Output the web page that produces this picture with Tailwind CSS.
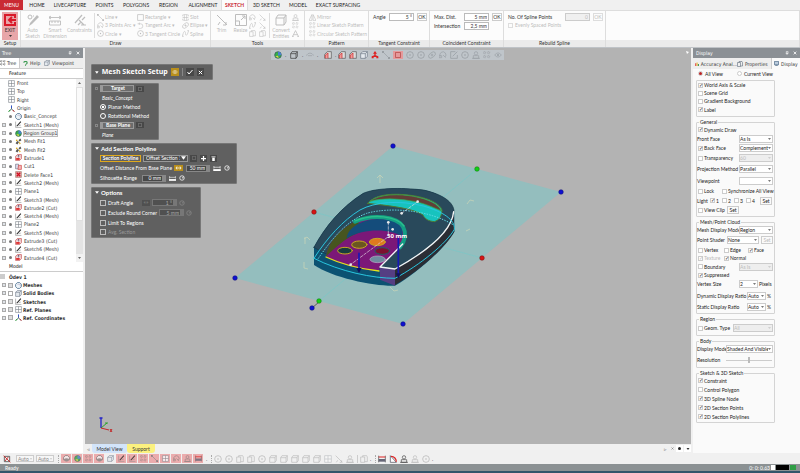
<!DOCTYPE html>
<html lang="en">

<head>
    <meta charset="UTF-8">
    <meta name="viewport" content="width=device-width, initial-scale=1.0">
    <title>Mesh Sketch Setup</title>
    <script src="https://cdn.jsdelivr.net/npm/@tailwindcss/browser@4"></script>
</head>

<body class="h-screen flex flex-col overflow-hidden bg-[#f0f0f0] font-['Lato','Open_Sans',sans-serif] text-[5px] leading-[6px] text-[#333] whitespace-nowrap">

    <!-- icons -->
    <svg class="hidden">
        <symbol id="i-plane" viewBox="0 0 12 12"><path d="M1 1h10v10H1zM6 1v10M1 6h10" fill="#fff" stroke="#777d85" /></symbol>
        <symbol id="i-origin" viewBox="0 0 12 12"><path d="M6 7V1M6 7l5 4M6 7l-5 4" fill="none" stroke="#356" stroke-width="1.3" /><path d="M6 1v4" stroke="#2a4bd0" stroke-width="1.6" /><path d="M8 9l3 2" stroke="#c22" stroke-width="1.6" /><path d="M4 9l-3 2" stroke="#2a2" stroke-width="1.6" /></symbol>
        <symbol id="i-mesh" viewBox="0 0 12 12"><path d="M4 1h4l3 3v4l-3 3H4L1 8V4z" fill="#eef4f8" stroke="#4b7090" stroke-width="1.4" /><path d="M4 4h5v4" fill="none" stroke="#aac" /></symbol>
        <symbol id="i-tbmesh" viewBox="0 0 12 12"><path d="M4 1h4l3 3v4H1V4z" fill="#f4f4f4" stroke="#666" stroke-width="1.3" /><path d="M1 8c3-3 7-3 10 0-3 4-7 4-10 0z" fill="#888" /></symbol>
        <symbol id="i-sketch" viewBox="0 0 12 12"><path d="M1 1v10h10" fill="none" stroke="#888" /><path d="M3 9l7-8" stroke="#222" stroke-width="1.8" /><path d="M6 8l4-1" stroke="#888" /></symbol>
        <symbol id="i-region" viewBox="0 0 12 12"><circle cx="6" cy="6" r="5" fill="#35b04a" stroke="#355" /><path d="M6 1a5 5 0 0 1 5 5l-5 1z" fill="#4a7fd0" /><path d="M2 8l4-1 1 4z" fill="#e3d24a" /></symbol>
        <symbol id="i-fit" viewBox="0 0 12 12"><path d="M1 9l3-4 3 2-3 4zM6 4l3-3 2 3-3 2z" fill="#555" /><path d="M6 6l4 3-2 2z" fill="#e0b020" /><circle cx="3" cy="4" r="1.5" fill="#e0b020" /></symbol>
        <symbol id="i-extrude" viewBox="0 0 12 12"><path d="M1 4l3-3h7v7l-3 3H1z" fill="#f6d9da" stroke="#b33" /><path d="M2 10V7h6v3z" fill="#d22" /><path d="M6 6V2M4 4l2-2 2 2" stroke="#446" fill="none" /></symbol>
        <symbol id="i-cut" viewBox="0 0 12 12"><path d="M1 2h5v8H1z" fill="#dde" stroke="#667" /><path d="M6 4h5v7H5z" fill="#f3b5b5" stroke="#c33" /></symbol>
        <symbol id="i-delete" viewBox="0 0 12 12"><path d="M1 1h10v10H1z" fill="#e5a3a6" stroke="#976" /><path d="M3 3l6 6M9 3l-6 6" stroke="#d00f20" stroke-width="2.2" /></symbol>
        <symbol id="i-solid" viewBox="0 0 12 12"><path d="M1 4l3-3h7v7l-3 3H1zM1 4h7v7M8 4l3-3" fill="#e4e9ee" stroke="#6a7684" /></symbol>
        <symbol id="i-line" viewBox="0 0 12 12"><path d="M2 2l8 8" stroke="currentColor" fill="none" /><path d="M0 0h3v3H0zM9 9h3v3H9z" fill="currentColor" /></symbol>
        <symbol id="i-rect" viewBox="0 0 12 12"><path d="M1 1h10v10H1z" stroke="currentColor" fill="none" stroke-width="1.2" /></symbol>
        <symbol id="i-circle" viewBox="0 0 12 12"><circle cx="6" cy="6" r="5" stroke="currentColor" fill="none" stroke-width="1.2" /><circle cx="6" cy="6" r="1.2" fill="currentColor" /></symbol>
        <symbol id="i-arc" viewBox="0 0 12 12"><path d="M2 8a4.500 4.500 0 1 1 7 1M6 6l4 4M0 7h4v3H0z" stroke="currentColor" fill="none" /></symbol>
        <symbol id="i-tarc" viewBox="0 0 12 12"><path d="M1 3h5a4 4 0 0 1 0 8M4 1v4M3 11h3" stroke="currentColor" fill="none" /></symbol>
        <symbol id="i-slot" viewBox="0 0 12 12"><path d="M4 1h4a4 4 0 0 1 0 10H4A4 4 0 0 1 4 1zM1 6h10M4 1v10M8 1v10" stroke="currentColor" fill="none" /></symbol>
        <symbol id="i-ellipse" viewBox="0 0 12 12"><ellipse cx="6" cy="6" rx="6" ry="3.500" transform="rotate(-40 6 6)" stroke="currentColor" fill="none" /><path d="M4 6h4M6 4v4" stroke="currentColor" /></symbol>
        <symbol id="i-spline" viewBox="0 0 12 12"><path d="M1 10C3 0 6 1 6 6s3 4 5-4M0 8v3h3M9 1h3v2" stroke="currentColor" fill="none" /></symbol>
        <symbol id="i-pencil" viewBox="0 0 12 12"><circle cx="3" cy="3" r="2" stroke="currentColor" fill="none" /><path d="M2 12l1-3 7-8 2 2-7 7z" fill="currentColor" /><path d="M6 2l1 0" stroke="currentColor" /></symbol>
        <symbol id="i-dim" viewBox="0 0 12 12"><path d="M0 2v3M12 2v3M0 3.500h12M2 2L0 3.500 2 5M10 2l2 1.500L10 5M.5 7h11v4H.5zM3 7v2M6 7v2M9 7v2" stroke="currentColor" fill="none" stroke-width=".9" /></symbol>
        <symbol id="i-constraint" viewBox="0 0 12 12"><path d="M1 9L8 1M4 11l3-3M5 6l5 5M8 6l3-3M7 11h5" stroke="currentColor" fill="none" stroke-width="1.200" /></symbol>
        <symbol id="i-trim" viewBox="0 0 12 12"><path d="M1 1l10 10M10 8v3H7M4 8l-2 3" stroke="currentColor" fill="none" /></symbol>
        <symbol id="i-resize" viewBox="0 0 12 12"><path d="M.5 .5h11v11H.5zM.5 7h4v4.500M6 6l4-4M7 2h3v3" stroke="currentColor" fill="none" /></symbol>
        <symbol id="i-cube" viewBox="0 0 12 12"><path d="M1 4l2-3h8v7l-2 3H1zM1 4h8v7M9 4l2-3" stroke="currentColor" fill="none" /></symbol>
        <symbol id="i-mirror" viewBox="0 0 12 12"><path d="M5 1v10H0zM7 1v10h5z" stroke="currentColor" fill="none" /></symbol>
        <symbol id="i-pattern" viewBox="0 0 12 12"><path d="M1 1h3v3H1zM7 1h3v3H7zM1 7h3v3H1zM7 7h3v3H7z" stroke="currentColor" fill="none" stroke-dasharray="2 1" /></symbol>
        <symbol id="i-text" viewBox="0 0 12 12"><path d="M1 11L6 1l5 10M3 8h6M0 11h3M9 11h3" stroke="currentColor" fill="none" stroke-width="1.300" /></symbol>
        <symbol id="i-person" viewBox="0 0 12 12"><circle cx="6" cy="3.500" r="2.500" stroke="currentColor" fill="none" /><path d="M2 7h8v4H2zM0 11h12" stroke="currentColor" fill="none" /></symbol>
        <symbol id="i-edit" viewBox="0 0 12 12"><path d="M8 1H1v10h10V6M4 8l7-7" stroke="currentColor" fill="none" stroke-width="1.200" /></symbol>
        <symbol id="i-page" viewBox="0 0 12 12"><path d="M1 3h6v8H1zM4 3V1h6l1 2v7H7" stroke="currentColor" fill="none" /></symbol>
        <symbol id="i-caliper" viewBox="0 0 12 12"><path d="M1 1v10M11 1v10" stroke="#444" /><path d="M1 3h10" stroke="#d22" stroke-width="1.500" /><path d="M1 6h10v4H1z" fill="#667" /></symbol>
        <symbol id="i-angle" viewBox="0 0 12 12"><path d="M2 1v10h9z" fill="#fff" stroke="#445" /><path d="M3 2c5 0 8 4 8 8" fill="none" stroke="#d22" stroke-width="1.800" /></symbol>
        <symbol id="i-section" viewBox="0 0 12 12"><path d="M1 11V5l4-4h6v10z" fill="#ddd" stroke="#555" /><path d="M2 11V6l4-3v8" fill="#e99" stroke="#c22" /></symbol>
        <symbol id="i-peak" viewBox="0 0 12 12"><path d="M6 0l3 4H7v3H5V4H3z" fill="#d22" /><path d="M1 11V8l5-2 5 2v3H8V9H4v2z" fill="#d22" /></symbol>
        <symbol id="i-cap" viewBox="0 0 12 12"><path d="M1 7c1-5 9-5 10 0M3 7h6" stroke="currentColor" fill="none" /></symbol>
        <symbol id="i-eye" viewBox="0 0 12 12"><path d="M1 6c3-4 7-4 10 0-3 4-7 4-10 0z" stroke="currentColor" fill="none" /><circle cx="6" cy="6" r="1.500" fill="currentColor" /></symbol>
        <symbol id="i-ruler" viewBox="0 0 12 8"><path d="M1 0v4M11 0v4M1 2h10" stroke="currentColor" /><path d="M0 5h12v3H0z" fill="currentColor" /></symbol>
        <symbol id="i-clock" viewBox="0 0 12 12"><circle cx="6" cy="6" r="4.500" stroke="currentColor" fill="none" stroke-width="1.500" /><path d="M6 6l4-3M6 6h3" stroke="currentColor" /></symbol>
        <symbol id="i-pin" viewBox="0 0 12 12"><path d="M4 1h5v6H4zM2 7h8M6 7v5" stroke="currentColor" fill="none" stroke-width="1.600" /></symbol>
        <symbol id="i-x" viewBox="0 0 12 12"><path d="M2 2l8 8M10 2l-8 8" stroke="currentColor" stroke-width="2.400" /></symbol>
        <symbol id="i-nosnap" viewBox="0 0 12 12"><path d="M2 2h8v8H2z" stroke="#555" fill="none" stroke-width="1.300" /><path d="M1 1l10 10M8 3L3 9" stroke="#c22" stroke-width="1.300" /></symbol>
        <symbol id="i-down" viewBox="0 0 6 4"><path d="M0 0h6L3 4z" fill="currentColor" /></symbol>
    </svg>

    <nav class="h-[10px] shrink-0 flex items-stretch text-[#222]">
        <button class="w-[23px] bg-[#c92a33] text-white">MENU</button>
        <a href="#" class="w-[28px] grid place-items-center">HOME</a>
        <a href="#" class="w-[38px] grid place-items-center">LIVECAPTURE</a>
        <a href="#" class="w-[31px] grid place-items-center">POINTS</a>
        <a href="#" class="w-[32px] grid place-items-center">POLYGONS</a>
        <a href="#" class="w-[33px] grid place-items-center">REGION</a>
        <a href="#" class="w-[36px] grid place-items-center">ALIGNMENT</a>
        <a href="#" class="w-[27px] grid place-items-center bg-[#fcfcfc] border-x border-[#ddd] text-[#c92a33] font-bold">SKETCH</a>
        <a href="#" class="w-[37px] grid place-items-center">3D SKETCH</a>
        <a href="#" class="w-[26px] grid place-items-center">MODEL</a>
        <a href="#" class="w-[54px] grid place-items-center">EXACT SURFACING</a>
    </nav>

    <header id="ribbon" class="h-[38px] shrink-0 flex bg-[#fcfcfc] border-y border-[#ddd] border-b-[#bfc3c7] text-[#bdbdbd]
        [&>section]:flex [&>section]:flex-col [&>section]:border-r [&>section]:border-[#ddd] [&>section>div]:h-[29px] [&>section>div]:shrink-0
        [&_h2]:flex-1 [&_h2]:bg-[#ebebeb] [&_h2]:text-[#333] [&_h2]:text-center [&_h2]:leading-[7px]">
        <section class="w-[21px]">
            <div class="px-[2px] pt-px">
                <button class="w-full h-full bg-[#e8a6a9] text-[#333] flex flex-col items-center">
                    <svg class="w-3 h-3 mt-[2px]" viewBox="0 0 12 12"><path d="M11 4V1H1v10h10V8M5 6h7M8 3L5 6l3 3" fill="none" stroke="#d91a2a" stroke-width="2" /></svg>
                    <span class="mt-px">EXIT</span>
                    <svg class="w-[3px] h-[2px] mt-[2px]"><use href="#i-down" /></svg>
                </button>
            </div>
            <h2>Setup</h2>
        </section>
        <section class="w-[190px]">
            <div class="flex">
                <button class="w-[23px] pt-[3px] flex flex-col items-center" disabled><svg class="w-3 h-3 mb-px"><use href="#i-pencil" /></svg>Auto<br>Sketch</button>
                <button class="w-[22px] pt-[3px] flex flex-col items-center" disabled><svg class="w-3 h-3 mb-px"><use href="#i-dim" /></svg>Smart<br>Dimension</button>
                <button class="w-[27px] pt-[3px] flex flex-col items-center" disabled><svg class="w-3 h-3 mb-px"><use href="#i-constraint" /></svg>Constraints</button>
                <div data-tools="line:Line ▾,arc:3 Points Arc ▾,circle:Circle ▾" class="w-[43px] ml-px my-[2px] border-l border-[#ddd] pl-[2px] flex flex-col"></div>
                <div data-tools="rect:Rectangle ▾,tarc:Tangent Arc ▾,circle:3 Tangent Circle" class="w-[45px] my-[2px] flex flex-col"></div>
                <div data-tools="slot:Slot,ellipse:Ellipse ▾,spline:Spline" class="w-[28px] my-[2px] flex flex-col"></div>
            </div>
            <h2>Draw</h2>
        </section>
        <section class="w-[94px]">
            <div class="flex">
                <button class="w-[21px] pt-[3px] flex flex-col items-center" disabled><svg class="w-3 h-3 mb-px"><use href="#i-trim" /></svg>Trim</button>
                <button class="w-[17px] pt-[3px] flex flex-col items-center" disabled><svg class="w-3 h-3 mb-px"><use href="#i-resize" /></svg>Resize</button>
                <div data-tools="arc:,spline:,page:" class="w-[10px] my-[2px] flex flex-col"></div>
                <div data-tools="trim:,trim:,page:" class="w-[11px] my-[2px] border-r border-[#ddd] flex flex-col"></div>
                <button class="w-[22px] pt-[3px] flex flex-col items-center" disabled><svg class="w-3 h-3 mb-px"><use href="#i-cube" /></svg>Convert<br>Entities</button>
                <div data-tools="person:,pattern:,text:" class="my-[2px] flex flex-col"></div>
            </div>
            <h2>Tools</h2>
        </section>
        <section class="w-[64px]">
            <div class="flex">
                <div data-tools="mirror:Mirror,pattern:Linear Sketch Pattern,pattern:Circular Sketch Pattern" class="ml-1 my-[2px] flex flex-col"></div>
            </div>
            <h2>Pattern</h2>
        </section>
        <section class="w-[61px]">
            <div class="flex items-start gap-[3px] pt-[2px] pl-1 text-[#333]">
                <label for="angle" class="w-[13px] leading-[8px]">Angle</label>
                <input id="angle" value="5 °" class="w-[25px] h-2 border border-[#bbb] bg-white text-right pr-px">
                <button class="w-[10px] h-2 border border-[#ccc] bg-white leading-[6px]">OK</button>
            </div>
            <h2>Tangent Constraint</h2>
        </section>
        <section class="w-[74px]">
            <div class="grid grid-cols-[27px_25px_10px] gap-x-[3px] gap-y-px content-start pt-[2px] pl-1 text-[#333]">
                <label for="maxd" class="leading-[8px]">Max. Dist.</label>
                <input id="maxd" value="5 mm" class="h-2 min-w-0 border border-[#bbb] bg-white text-right pr-px">
                <button class="h-2 border border-[#ccc] bg-white leading-[6px]">OK</button>
                <label for="inter" class="leading-[8px]">Intersection</label>
                <input id="inter" value="2,5 mm" class="h-2 min-w-0 border border-[#bbb] bg-white text-right pr-px">
            </div>
            <h2>Coincident Constraint</h2>
        </section>
        <section class="w-[102px]">
            <div class="pt-[2px] pl-1">
                <div class="flex gap-[3px]">
                    <label for="pts" class="w-[54px] leading-[8px] text-[#333]">No. Of Spline Points</label>
                    <input id="pts" value="0" disabled class="w-[25px] h-2 border border-[#ccc] bg-[#f0f0f0] text-right pr-px">
                    <button disabled class="w-[10px] h-2 border border-[#ddd] leading-[6px]">OK</button>
                </div>
                <label class="flex items-center gap-[2px] h-[8px]"><input type="checkbox" disabled class="appearance-none size-[5px] border border-[#ddd]">Evenly Spaced Points</label>
            </div>
            <h2>Rebuild Spline</h2>
        </section>
        <section class="flex-1"><div></div><h2></h2></section>
    </header>

    <main class="flex-1 min-h-0 flex">

        <aside class="w-[83px] shrink-0 flex flex-col bg-white font-['DejaVu_Sans_Condensed','DejaVu_Sans',sans-serif]">
            <div class="h-[10px] bg-[#8b9095] text-white flex items-center px-[2px] gap-[4px]">
                <span class="flex-1">Tree</span>
                <svg class="size-[4px]"><use href="#i-pin" /></svg><svg class="size-[4px] mr-px"><use href="#i-x" /></svg>
            </div>
            <div class="h-[11px] bg-[#eee] border-b border-[#ccc] flex items-stretch">
                <button class="w-[20px] bg-white border-r border-[#ccc] flex items-center gap-px"><svg class="size-[6px]"><use href="#i-pattern" /></svg>Tree</button>
                <button class="w-[22px] flex items-center gap-[2px] pl-[3px]"><svg class="size-[5px]" viewBox="0 0 12 12"><path d="M2 4c0-4 8-4 8 0S6 7 6 9M6 10v2" fill="none" stroke="#3a9a50" stroke-width="2.500" /></svg>Help</button>
                <button class="flex items-center gap-[2px] pl-[2px]"><svg class="size-[6px]"><use href="#i-solid" /></svg>Viewpoint</button>
            </div>
            <h3 class="h-[10px] border-b border-[#ccc] pl-[9px] leading-[9px] text-black">Feature</h3>
            <div class="h-[183px] flex">
                <ul id="features" class="flex-1 min-w-0 flex flex-col"></ul>
                <div class="w-[7px] bg-[#e4e4e4] flex flex-col items-center text-[#666]">
                    <span class="w-full h-[8px] bg-[#f2f2f2] grid place-items-center"><svg class="w-[3px] h-[2px] rotate-180"><use href="#i-down" /></svg></span>
                    <span class="w-full h-[134px] bg-[#fafafa] border border-[#e0e0e0]"></span>
                    <span class="w-full h-[8px] mt-auto bg-[#f2f2f2] grid place-items-center"><svg class="w-[3px] h-[2px]"><use href="#i-down" /></svg></span>
                </div>
            </div>
            <h3 class="h-[10px] border-b border-[#ccc] pl-[9px] leading-[8px] text-black">Model</h3>
            <div class="h-[9px] flex items-center gap-[4px] font-bold"><span class="size-[5px] bg-[#ccc]"></span>Ödev 1</div>
            <ul id="model" class="h-[41px] flex flex-col font-bold"></ul>
        </aside>

        <div class="flex-1 min-w-0 mx-[2px] flex flex-col">
            <section class="relative flex-1 min-h-0 bg-[#b3b3b3] overflow-hidden">
                <svg class="absolute inset-0 w-full h-full" viewBox="85 48 606 396">
                    <path d="M393 146L561 192 403 324 235 278z" fill="#94bebe" />
                    <g fill="none" stroke="#62d0d2" stroke-width=".5" opacity=".7"><path d="M314 212L482 258M477 169L319 301" /></g>
                    <g fill="none" stroke="#c5d3b8" stroke-width=".8"><path d="M380 183v-8M377 178l3-3 3 3M467 204l3-4 4 1M305 237v7M304 239l3-2 3 3M304 262v6l4 1M390 287l4 4 4-1M466 231l4-2" /></g>
                    <g transform="translate(300 170) scale(.3333)" fill="none" stroke-linecap="round" stroke-linejoin="round">
                        <path d="M42 232C75 170 125 110 190 70C225 54 300 52 370 60C430 73 462 98 463 135L463 185C435 235 350 310 285 347C230 350 100 325 42 285z" fill="#0c5272" />
                        <path d="M42 232C75 170 125 110 190 70C225 54 300 52 370 60C430 73 462 98 462 125C450 190 370 245 285 297C200 300 100 268 42 232z" fill="#29495b" stroke="#183646" stroke-width="2" />
                        <path d="M461 125C455 190 370 250 285 297V345C350 308 435 235 463 185z" fill="#2b2d34" />
                        <path d="M285 297L240 291v38l45 18z" fill="#553e83" />
                        <path d="M203 100C225 72 280 68 340 77C390 85 420 102 426 120C425 140 418 150 403 155C385 153 376 148 368 134C330 112 255 106 203 100z" fill="#17c3be" stroke="#4f7a32" stroke-width="3" />
                        <path d="M210 94C240 70 300 72 340 79C385 87 418 104 423 122C390 108 370 98 330 92C290 86 250 83 210 94z" fill="#623d38" stroke="#3ca644" stroke-width="2" />
                        <path d="M78 260C85 215 120 175 175 150C220 130 285 138 308 168C325 190 320 215 305 230L240 291L237 303C180 300 120 282 78 260z" fill="#7b1878" />
                        <path d="M78 260C85 215 120 175 175 150L180 187C150 198 120 218 78 260z" fill="#47551f" />
                        <path d="M140 205C145 160 215 138 270 150C300 160 315 175 305 200C280 180 200 170 140 205z" fill="#144c7b" />
                        <path d="M165 155C220 130 290 140 309 170C320 190 317 210 300 232" stroke="#149f84" stroke-width="12" />
                        <path d="M165 153C220 130 290 138 312 168" stroke="#2bbf8c" stroke-width="4" />
                        <g stroke="#c7a923" stroke-width="3"><ellipse cx="135" cy="242" rx="22" ry="10" fill="#173d3d" /><ellipse cx="178" cy="224" rx="23" ry="11" fill="#6b5620" /><ellipse cx="232" cy="216" rx="24" ry="11" fill="#e07a1e" /></g>
                        <ellipse cx="247" cy="243" rx="22" ry="10" fill="#7d1030" stroke="#206060" stroke-width="3" />
                        <ellipse cx="233" cy="268" rx="23" ry="10" fill="#6f8ca0" stroke="#bba7c4" stroke-width="2" />
                        <path d="M78 261C125 283 180 297 237 303" stroke="#dfe51d" stroke-width="4" />
                        <path d="M461 125C455 190 370 250 285 297L240 291L308 222" stroke="#f2f5f6" stroke-width="4" />
                        <path d="M42 265C120 305 220 325 285 325C360 285 440 220 463 178C466 150 430 125 370 108C300 90 225 95 180 120C130 150 80 205 42 265" stroke="#29c6df" stroke-width="3" />
                        <path d="M55 265C100 200 145 150 200 130C270 110 390 120 460 165" stroke="#65dbe8" stroke-width="3" stroke-dasharray="2 6" />
                        <path d="M150 285L265 200M305 130L353 95M265 157v38" stroke="#e2d9e2" stroke-width="2" stroke-dasharray="8 5" />
                        <g fill="#e8eaea"><circle cx="305" cy="130" r="4" /><circle cx="353" cy="95" r="4" /><circle cx="265" cy="157" r="4" /><circle cx="278" cy="178" r="4" /><circle cx="152" cy="284" r="4" /></g>
                        <path d="M177 250v45M295 205v105" stroke="#1717b5" stroke-width="5" />
                        <path d="M169 294l8 15 8-15zM287 310l8 15 8-15z" fill="#101060" />
                    </g>
                    <text x="387" y="238" fill="#fff" font-size="6" font-weight="700" font-family="Open Sans">50 mm</text>
                    <path d="M312 308l7-6" stroke="#222" stroke-width=".6" />
                    <g fill="#1010d0" stroke="#0b0b70" stroke-width=".5"><circle cx="393" cy="146" r="2.300" /><circle cx="561" cy="192" r="2.300" /><circle cx="403" cy="324" r="2.300" /><circle cx="235" cy="278" r="2.300" /><circle cx="312" cy="308" r="2.300" /></g>
                    <g fill="#14d014" stroke="#0b700b" stroke-width=".5"><circle cx="477" cy="169" r="2.300" /><circle cx="319" cy="301" r="2.300" /></g>
                    <g fill="#d81414" stroke="#700b0b" stroke-width=".5"><circle cx="314" cy="212" r="2.300" /><circle cx="482" cy="258" r="2.300" /></g>
                    <g fill="none" stroke-width=".9"><path d="M101 428v-10M99.500 418h3" stroke="#2222c8" stroke-width="1.300" /><path d="M101 428l6-5M105 423h3" stroke="#21a321" /><path d="M101 428l8 2M110 429l2 3M112 429l-2 3" stroke="#c41a1a" /></g>
                    <path d="M686 51l3 1-2 2z" fill="#fff" />
                </svg>

                <div id="viewbar" class="absolute left-[186px] top-[2px] h-[10px] bg-[#bfc5ca] flex items-center text-[#999fa4]"></div>

                <form class="absolute left-[6px] top-[16px] flex flex-col items-start gap-[3px] text-white
                    [&>section]:bg-[#606060] [&>section]:rounded-[1px] [&>section]:border [&>section]:border-[#777]">
                    <section class="w-[122px] h-[16px] flex items-center gap-[3px] px-[3px]">
                        <svg class="w-[4px] h-[3px]"><use href="#i-down" /></svg>
                        <h1 class="flex-1 font-['Open_Sans',sans-serif] text-[7px] font-bold">Mesh Sketch Setup</h1>
                        <button type="button" aria-label="Preview" class="w-[9px] h-[8px] bg-[#b98f1c] grid place-items-center"><svg class="size-[6px]"><use href="#i-eye" /></svg></button>
                        <span class="w-px h-[8px] bg-[#888]"></span>
                        <button type="button" aria-label="OK" class="size-[8px] bg-[#484848] grid place-items-center"><svg class="size-[6px]" viewBox="0 0 12 12"><path d="M1 6l3 4 7-8" fill="none" stroke="#fff" stroke-width="2" /></svg></button>
                        <button type="button" aria-label="Cancel" class="size-[8px] bg-[#484848] grid place-items-center mr-[5px]"><svg class="size-[5px]"><use href="#i-x" /></svg></button>
                    </section>

                    <section class="w-[68px] h-[57px] px-[3px] flex flex-col justify-around">
                        <div class="flex items-center gap-[2px]"><span class="size-[3px] border border-[#888]"></span><button type="button" class="w-[34px] h-[7px] border border-[#999] border-l-[3px] bg-[#6c6c6c] font-bold leading-[5px]">Target</button><button type="button" aria-label="Reset target" class="w-[8px] h-[6px] bg-[#484848] grid place-items-center text-[#aaa]"><svg class="size-[4px]"><use href="#i-rect" /></svg></button></div>
                        <em class="pl-[7px]">Basic_Concept</em>
                        <label class="flex items-center gap-[2px] pl-[5px]"><input type="radio" name="method" checked class="appearance-none size-[6px] rounded-full border border-white grid place-items-center checked:before:content-[''] checked:before:size-[2px] checked:before:bg-white">Planar Method</label>
                        <label class="flex items-center gap-[2px] pl-[5px]"><input type="radio" name="method" class="appearance-none size-[6px] rounded-full border border-white">Rotational Method</label>
                        <div class="flex items-center gap-[2px]"><span class="size-[3px] border border-[#888]"></span><button type="button" class="w-[34px] h-[7px] border border-[#999] border-l-[3px] bg-[#6c6c6c] font-bold leading-[5px]">Base Plane</button><button type="button" aria-label="Reset base plane" class="w-[8px] h-[6px] bg-[#484848] grid place-items-center text-[#aaa]"><svg class="size-[4px]"><use href="#i-rect" /></svg></button></div>
                        <em class="pl-[7px]">Plane</em>
                    </section>

                    <section class="w-[146px] h-[41px] px-[3px] flex flex-col justify-around">
                        <h2 class="flex items-center gap-[2px] text-[6px] font-bold"><svg class="w-[4px] h-[3px]"><use href="#i-down" /></svg>Add Section Polyline</h2>
                        <div class="flex items-center gap-[2px] pl-[5px]">
                            <button type="button" class="w-[41px] h-[7px] border border-[#e0a91c] font-bold leading-[5px]">Section Polyline</button>
                            <span class="w-[45px] h-[7px] border border-[#999] bg-[#505050] flex items-center">
                                <select aria-label="Section type" class="appearance-none w-[36px] h-[6px] pl-[2px]"><option>Offset Section 1</option></select>
                                <svg class="w-[5px] h-[4px] ml-px"><use href="#i-down" /></svg>
                            </span>
                            <button type="button" aria-label="Clear" class="size-[7px] bg-[#484848] grid place-items-center text-[#999]"><svg class="size-[4px]"><use href="#i-rect" /></svg></button>
                            <button type="button" aria-label="Add" class="size-[7px] ml-px bg-[#484848] grid place-items-center"><svg class="size-[5px]" viewBox="0 0 12 12"><path d="M6 0v12M0 6h12" stroke="#fff" stroke-width="3" /></svg></button>
                            <button type="button" aria-label="Delete" class="size-[7px] ml-px bg-[#484848] grid place-items-center"><svg class="size-[5px]" viewBox="0 0 12 12"><path d="M3 4h6v8H3zM1 1h10v2H1z" fill="#fff" /></svg></button>
                        </div>
                        <div class="flex items-center gap-[3px] pl-[5px]">
                            <label for="offset" class="w-[71px]">Offset Distance From Base Plane</label>
                            <button type="button" aria-label="Flip" class="w-[9px] h-[6px] bg-[#b98f1c] grid place-items-center"><svg class="w-[7px] h-[4px]" viewBox="0 0 12 8"><path d="M1 4h10M3 1L1 4l2 3M9 1l2 3-2 3" fill="none" stroke="#fff" stroke-width="1.500" /></svg></button>
                            <input id="offset" value="50 mm" class="w-[24px] h-[7px] bg-[#484848] border border-[#888] border-r-[4px] text-right pr-px">
                            <svg class="w-[8px] h-[5px]"><use href="#i-ruler" /></svg><svg class="size-[6px]"><use href="#i-clock" /></svg>
                        </div>
                        <div class="flex items-center gap-[3px] pl-[5px]">
                            <label for="sil" class="w-[39px]">Silhouette Range</label>
                            <input id="sil" value="0 mm" class="w-[24px] h-[7px] bg-[#484848] border border-[#888] border-r-[4px] text-right pr-px">
                            <svg class="w-[7px] h-[5px]"><use href="#i-ruler" /></svg><svg class="size-[6px]"><use href="#i-clock" /></svg>
                        </div>
                    </section>

                    <section class="w-[110px] h-[51px] px-[3px] flex flex-col justify-around [&_input[type=checkbox]]:appearance-none [&_input[type=checkbox]]:shrink-0 [&_input[type=checkbox]]:size-[6px] [&_input[type=checkbox]]:border [&_input[type=checkbox]]:border-[#bbb]">
                        <h2 class="flex items-center gap-[2px] text-[6px] font-bold"><svg class="w-[4px] h-[3px]"><use href="#i-down" /></svg>Options</h2>
                        <div class="flex items-center gap-[2px] pl-[5px]">
                            <label class="w-[40px] flex items-center gap-[2px]"><input type="checkbox">Draft Angle</label>
                            <span class="w-[8px] h-[6px] bg-[#505050] text-[#888] text-center leading-[5px]">↔</span>
                            <input aria-label="Draft angle" value="1 °" disabled class="w-[25px] h-[7px] bg-[#505050] border border-[#777] border-r-[4px] text-[#aaa] text-right pr-px">
                            <svg class="size-[6px] text-[#888]"><use href="#i-clock" /></svg>
                        </div>
                        <div class="flex items-center gap-[2px] pl-[5px]">
                            <label class="w-[57px] flex items-center gap-[2px]"><input type="checkbox">Exclude Round Corner</label>
                            <input aria-label="Corner radius" value="5 mm" disabled class="w-[25px] h-[7px] bg-[#505050] border border-[#777] border-r-[4px] text-[#aaa] text-right pr-px">
                            <svg class="size-[6px] text-[#888]"><use href="#i-clock" /></svg>
                        </div>
                        <label class="flex items-center gap-[2px] pl-[5px]"><input type="checkbox">Limit To Regions</label>
                        <label class="flex items-center gap-[2px] pl-[5px] text-[#999]"><input type="checkbox" disabled>Avg. Section</label>
                    </section>
                </form>
            </section>

            <div class="h-[9px] shrink-0 flex items-stretch">
                <button class="w-[7px] text-[#777]">◃</button>
                <button class="w-[35px] bg-[#d2e4fa] rounded-b-[3px]">Model View</button>
                <button class="w-[28px] bg-[#fbf17f] rounded-b-[3px]">Support</button>
                <span class="flex-1"></span>
                <button class="w-[8px] text-[#777]">▹</button>
                <button aria-label="Close view" class="w-[7px] grid place-items-center text-[#777]"><svg class="size-[3px]"><use href="#i-x" /></svg></button>
                <button aria-label="Dock" class="w-[7px] my-px mr-px bg-white grid place-items-center"><span class="size-[3px] rounded-full bg-[#222]"></span></button>
                <button aria-label="Views" class="w-[7px] my-px bg-white grid place-items-center"><svg class="w-[4px] h-[2px]"><use href="#i-down" /></svg></button>
            </div>
        </div>

        <aside class="w-[107px] shrink-0 bg-[#fafafa] font-['DejaVu_Sans_Condensed','DejaVu_Sans',sans-serif]">
            <div class="h-[10px] bg-[#8b9095] text-white flex items-center px-[3px] gap-[4px]">
                <span class="flex-1">Display</span>
                <svg class="size-[4px]"><use href="#i-pin" /></svg><svg class="size-[4px]"><use href="#i-x" /></svg>
            </div>
            <div class="h-[11px] bg-[#eee] flex items-stretch">
                <button class="w-[44px] pl-[2px] flex items-center gap-[2px]"><svg class="size-[6px]" viewBox="0 0 12 12"><path d="M1 4h3v8H1z" fill="#d22" /><path d="M5 1h3v11H5z" fill="#e8b820" /><path d="M9 6h3v6H9z" fill="#284" /></svg>Accuracy Anal...</button>
                <button class="w-[34px] flex items-center gap-[2px]"><svg class="size-[6px] text-[#456]"><use href="#i-page" /></svg>Properties</button>
                <button class="flex-1 bg-[#fafafa] border-l border-[#ccc] pl-[2px] flex items-center gap-[2px]"><svg class="size-[5px]" viewBox="0 0 12 12"><path d="M1 1h10v8H1zM3 11h6" fill="#bcd" stroke="#357" stroke-width="1.500" /></svg>Display</button>
            </div>
            <form id="display" class="w-[79px] ml-[3px] flex flex-col gap-[2px] font-['Lato',sans-serif] text-[#222]"></form>
        </aside>
    </main>

    <div id="toolbar" class="h-[11px] shrink-0 flex items-center pl-[3px] text-[#bbb]"></div>

    <footer class="h-[9px] shrink-0 bg-[#8b9193] border-b-2 border-[#33556b] text-white flex items-center pl-[5px] pr-1 gap-px">
        <span class="flex-1">Ready</span>
        <span>0: 0: 0.63</span>
        <span class="w-[4px] h-[5px] bg-white"></span>
        <span class="w-[13px] h-[5px] bg-black"></span>
        <span class="w-[6px] h-[5px] bg-[#2f9e45]"></span>
    </footer>

    <script>
        const icon = (name, cls) => `<svg class="shrink-0 ${cls}"><use href="#i-${name}" /></svg>`;

        // ribbon columns of small tool buttons
        document.querySelectorAll('[data-tools]').forEach(col => {
            col.innerHTML = col.dataset.tools.split(',').map(t => {
                const [i, label] = t.split(':');
                return `<button disabled aria-label="${label || i}" class="flex-1 flex items-center gap-px">${icon(i, 'size-[7px]')}${label}</button>`;
            }).join('');
        });

        // feature tree
        const features = [
            ['plane', 'Front', 0], ['plane', 'Top', 0], ['plane', 'Right', 0], ['origin', 'Origin', 0], ['mesh', 'Basic_Concept', 1],
            ['sketch', 'Sketch1 (Mesh)', 2], ['region', 'Region Group1', 2], ['fit', 'Mesh Fit1', 2], ['fit', 'Mesh Fit2', 2],
            ['extrude', 'Extrude1', 2], ['cut', 'Cut1', 2], ['delete', 'Delete Face1', 2], ['sketch', 'Sketch2 (Mesh)', 2],
            ['plane', 'Plane1', 2], ['sketch', 'Sketch3 (Mesh)', 2], ['extrude', 'Extrude2 (Cut)', 2], ['sketch', 'Sketch4 (Mesh)', 2],
            ['plane', 'Plane2', 2], ['sketch', 'Sketch5 (Mesh)', 2], ['extrude', 'Extrude3 (Cut)', 2], ['sketch', 'Sketch6 (Mesh)', 2],
            ['extrude', 'Extrude4 (Cut)', 2]
        ];
        const plus = '<span class="size-[4px] border border-[#aaa] bg-[#dfe3e8] mr-[2px]"></span>';
        const dot = '<span class="size-[3px] rounded-full bg-[#777] mr-[3px] ml-px"></span>';
        document.getElementById('features').innerHTML = features.map(([i, name, level]) => `
            <li class="flex-1 min-h-0 flex items-center ${level == 2 ? 'pl-[2px]' : 'pl-[8px]'}">
                ${level == 2 ? plus : ''}${level ? dot : ''}${icon(i, 'size-[7px] mr-px')}
                <span class="${name == 'Region Group1' ? 'border border-[#bbb] bg-[#f2f2f2]' : 'border border-transparent'}">${name}</span>
            </li>`).join('');

        const model = [['mesh', 'Meshes'], ['solid', 'Solid Bodies'], ['sketch', 'Sketches'], ['plane', 'Ref. Planes'], ['origin', 'Ref. Coordinates']];
        document.getElementById('model').innerHTML = model.map(([i, name]) => `
            <li class="flex-1 min-h-0 flex items-center pl-[2px]">${plus}
                <span class="size-[5px] mr-[2px] border border-[#aaa] ${i == 'solid' ? 'bg-white' : 'bg-[#ddd]'}"></span>
                ${icon(i, 'size-[7px] mr-px')}${name}</li>`).join('');

        // toolbar over the viewport
        const dotSep = '<span class="w-[5px] text-center text-[#444]">.</span>';
        document.getElementById('viewbar').innerHTML = '<span class="w-[3px]"></span>' +
            icon('region', 'size-[8px] mr-px') + dotSep + icon('cube', 'size-[8px] mx-[2px] text-[#333]') + dotSep +
            icon('cap', 'size-[8px] mx-px') + dotSep + icon('section', 'size-[8px] ml-[4px] mr-px') + dotSep +
            ['section', 'section', 'solid', 'peak', 'line'].map(i => icon(i, 'size-[8px] mr-[3px]')).join('') +
            `<span class="w-[10px] h-[8px] bg-[#e59a9b] grid place-items-center text-[#a33] mr-[2px]">${icon('rect', 'size-[6px]')}</span>` +
            ['circle', 'circle', 'ellipse', 'arc', 'edit', 'circle', 'person', 'pattern', 'eye'].map(i => icon(i, 'size-[8px] mx-px mr-[2px]')).join('');

        // bottom toolbar
        const pick = (v) => `<span class="w-[18px] h-[7px] mr-[2px] border border-[#ccc] bg-[#f6f6f6] flex items-center">
            <select aria-label="Snap" class="appearance-none w-[13px] h-[6px] pl-px text-[#888]"><option>${v}</option></select>${icon('down', 'w-[2px] h-[2px]')}</span>`;
        const grip = '<span class="h-[8px] border-l border-dotted border-[#aaa] mx-[2px]"></span>';
        document.getElementById('toolbar').innerHTML =
            icon('nosnap', 'size-[8px] mr-[5px]') + pick('Auto') + pick('Auto') + grip +
            ['tbmesh', 'region', 'pattern', 'tbmesh', 'solid', 'sketch', 'sketch', 'pattern', 'line', 'plane', 'arc', 'person', 'caliper'].map(i =>
                `<span class="w-[10px] h-[9px] mr-px grid place-items-center text-[#777] ${i == 'solid' ? 'bg-[#f0f0f0]' : 'bg-[#ebacad]'}">${icon(i, 'size-[7px] opacity-80')}</span>`).join('') +
            dotSep + grip +
            ['circle', 'circle', 'page', 'page', 'circle', 'cube', 'cube', 'cube', 'cube', 'cube', 'plane', 'trim', 'person'].map(i => icon(i, 'size-[8px] mr-[3px] ' + (i == 'plane' ? 'opacity-40' : ''))).join('') +
            '<span class="w-px h-[8px] bg-[#ccc] mr-[2px]"></span>' + icon('page', 'size-[8px]') + dotSep + grip +
            icon('caliper', 'size-[8px] mr-[3px]') + icon('angle', 'size-[8px] mr-[3px]') + icon('person', 'size-[8px] mr-[3px] text-[#444]') +
            icon('person', 'size-[8px] mr-[3px]') + icon('circle', 'size-[8px]') + dotSep;

        // display panel
        const check = (label, on, cls = '', off) => `<label class="flex items-center gap-px ${off ? 'text-[#bbb]' : ''} ${cls}">
            <input type="checkbox" ${on ? 'checked' : ''} ${off ? 'disabled' : ''} class="appearance-none size-[5px] shrink-0 border border-[#ccc] bg-white grid place-items-center text-[5px] leading-[3px] checked:before:content-['✓']">${label}</label>`;
        const select = (id, value, cls, off) => `<span class="h-[8px] shrink-0 border border-[#ccc] flex items-center pr-px ${off ? 'bg-[#eee] text-[#bbb]' : 'bg-white'} ${cls}">
            <select id="${id}" aria-label="${id}" ${off ? 'disabled' : ''} class="appearance-none flex-1 min-w-0 h-[6px]"><option>${value}</option></select>${icon('down', 'w-[3px] h-[2px] opacity-60')}</span>`;
        const label = (id, text, cls) => `<label for="${id}" class="shrink-0 ${cls}">${text}</label>`;
        const row = (h, html) => `<div class="flex items-center ${h}">${html}</div>`;
        const group = (title, html) => `<fieldset class="border border-[#d4d4d4] rounded-[1px] pb-px min-w-0">
            <legend class="ml-[2px] px-px leading-[6px]">${title}</legend>${html}</fieldset>`;
        const set = (off) => `<button type="button" ${off ? 'disabled' : ''} class="w-[12px] h-[8px] border border-[#ccc] bg-[#fafafa] leading-[6px] ${off ? 'text-[#bbb]' : ''}">Set</button>`;
        const radio = (text, on) => `<label class="flex items-center gap-[2px]"><input type="radio" name="view" ${on ? 'checked' : ''} class="appearance-none size-[5px] rounded-full border border-[#ccc] bg-white grid place-items-center checked:before:content-[''] checked:before:size-[3px] checked:before:rounded-full checked:before:bg-[#b22]">${text}</label>`;

        document.getElementById('display').innerHTML =
            `<div class="h-[9px] flex items-center gap-[14px] pl-[2px]">${radio('All View', true)}${radio('Current View')}</div>` +
            `<div class="border border-[#d4d4d4] rounded-[1px] pl-px pb-[2px]">
                ${row('h-[8px]', check('World Axis &amp; Scale', true))}${row('h-[8px]', check('Scene Grid'))}
                ${row('h-[8px]', check('Gradient Background'))}${row('h-[9px]', check('Label', true))}</div>` +
            group('General',
                row('h-[9px] pl-px', check('Dynamic Draw', true)) +
                row('h-[9px]', label('front', 'Front Face', 'w-[42px]') + select('front', 'As Is', 'w-[34px]')) +
                row('h-[10px]', check('Back Face', true, 'w-[42px] pl-px') + select('back', 'Complement', 'w-[34px]')) +
                row('h-[10px]', check('Transparency', false, 'w-[42px] pl-px') + select('transparency', '60', 'w-[34px]', true)) +
                row('h-[12px]', label('projection', 'Projection Method', 'w-[42px]') + select('projection', 'Parallel', 'w-[34px]')) +
                row('h-[11px]', label('viewpoint', 'Viewpoint', 'w-[42px]') + select('viewpoint', '', 'w-[34px]')) +
                row('h-[10px] pl-px', check('Lock', false, 'w-[24px]') + check('Synchronize All View')) +
                row('h-[9px]', '<span class="w-[13px]">Light</span>' + check('1', true, 'w-[12px]') + check('2', false, 'w-[12px]') + check('3', false, 'w-[12px]') + check('4', false, 'w-[14px]') + set()) +
                row('h-[10px] pl-px', check('View Clip', false, 'w-[29px]') + set())) +
            group('Mesh/Point Cloud',
                row('h-[9px]', label('mode', 'Mesh Display Mode', 'w-[42px]') + select('mode', 'Region', 'w-[34px]')) +
                row('h-[12px]', label('shader', 'Point Shader', 'w-[30px]') + select('shader', 'None', 'w-[32px] mr-[2px]') + set(true)) +
                row('h-[8px] pl-px', check('Vertex', false, 'w-[26px]') + check('Edge', false, 'w-[24px]') + check('Face', true)) +
                row('h-[8px] pl-px', check('Texture', true, 'w-[26px]', true) + check('Normal', true)) +
                row('h-[9px]', check('Boundary', false, 'w-[42px] pl-px') + select('boundary', 'As Is', 'w-[34px]', true)) +
                row('h-[8px] pl-px', check('Suppressed', true)) +
                row('h-[10px]', label('vertex', 'Vertex Size', 'w-[42px]') + select('vertex', '2', 'w-[19px] mr-px') + 'Pixels') +
                row('h-[13px]', label('dynamic', 'Dynamic Display Ratio', 'w-[50px]') + select('dynamic', 'Auto', 'w-[19px] mr-px') + '%') +
                row('h-[10px]', label('static', 'Static Display Ratio', 'w-[50px]') + select('static', 'Auto', 'w-[19px] mr-px') + '%')) +
            group('Region', row('h-[12px]', check('Geom. Type', false, 'w-[36px] pl-px') + select('geometry', 'All', 'w-[40px]', true))) +
            group('Body',
                row('h-[10px]', label('body', 'Display Mode', 'w-[29px]') + select('body', 'Shaded And Visible', 'w-[47px]')) +
                row('h-[12px]', label('res', 'Resolution', 'w-[29px]') +
                    '<input id="res" type="range" class="appearance-none w-[46px] h-px bg-[#ccc] [&::-webkit-slider-thumb]:appearance-none [&::-webkit-slider-thumb]:w-[2px] [&::-webkit-slider-thumb]:h-[6px] [&::-webkit-slider-thumb]:bg-[#bbb]">')) +
            group('Sketch &amp; 3D Sketch',
                row('h-[9px] pl-px', check('Constraint', true)) + row('h-[9px] pl-px', check('Control Polygon')) + row('h-[9px] pl-px', check('3D Spline Node', true)) +
                row('h-[9px] pl-px', check('2D Section Points', true)) + row('h-[9px] pl-px', check('2D Section Polylines', true)));
    </script>
</body>

</html>
